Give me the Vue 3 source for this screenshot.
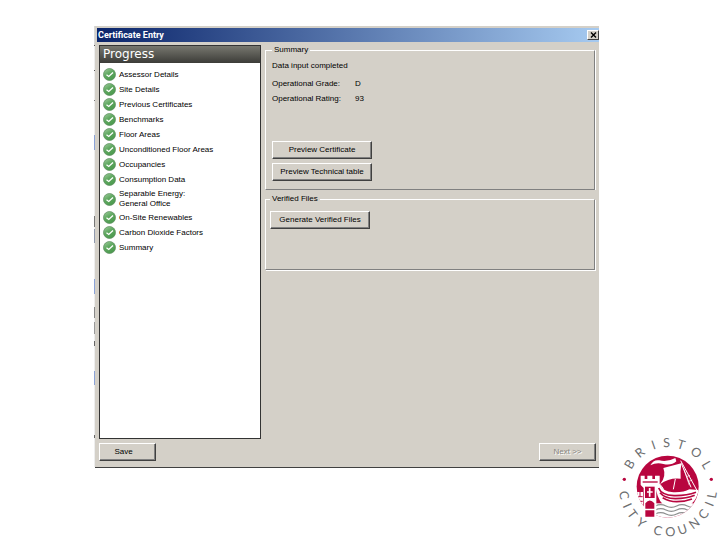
<script setup>
const steps = [
  'Assessor Details',
  'Site Details',
  'Previous Certificates',
  'Benchmarks',
  'Floor Areas',
  'Unconditioned Floor Areas',
  'Occupancies',
  'Consumption Data',
  'Separable Energy:\nGeneral Office',
  'On-Site Renewables',
  'Carbon Dioxide Factors',
  'Summary',
]

const ring = (word, angles) => [...word].map((char, i) => ({ char, angle: angles[i] }))
const topLetters = ring('BRISTOL', [-59, -39, -19, -2, 17, 39, 60])
const bottomLetters = ring('CITYCOUNCIL', [-80, -66, -53, -37, -13, 3, 19, 36, 53, 68, 80])
</script>

<template>
  <div class="page">
    <div class="sliver" aria-hidden="true"></div>
    <main class="dialog">
      <header class="titlebar">
        <h1>Certificate Entry</h1>
        <button type="button" class="close" aria-label="Close">
          <svg viewBox="0 0 7 6" width="7" height="6"><path d="M1 0.5 L6 5.5 M6 0.5 L1 5.5" stroke="#000" stroke-width="1.4" /></svg>
        </button>
      </header>

      <div class="body">
        <nav class="progress">
          <h2>Progress</h2>
          <ul>
            <li v-for="step in steps" :key="step">
              <svg class="tick" viewBox="0 0 26 26" width="13" height="13" aria-hidden="true">
                <defs>
                  <linearGradient id="ball" x1="0" y1="0" x2="0.6" y2="1">
                    <stop offset="0" stop-color="#a3cfa0" />
                    <stop offset="0.5" stop-color="#5fa860" />
                    <stop offset="1" stop-color="#4c9a4e" />
                  </linearGradient>
                </defs>
                <circle cx="13" cy="13" r="12" fill="url(#ball)" stroke="#5d8f60" stroke-width="1.5" />
                <path d="M7 13.5 L11.5 17 L20 9" fill="none" stroke="#fff" stroke-width="2.6" />
              </svg>
              <span>{{ step }}</span>
            </li>
          </ul>
        </nav>

        <div class="groups">
          <fieldset class="summary">
            <legend>Summary</legend>
            <p>Data input completed</p>
            <dl>
              <dt>Operational Grade:</dt>
              <dd>D</dd>
              <dt>Operational Rating:</dt>
              <dd>93</dd>
            </dl>
            <button type="button" class="btn wide">Preview Certificate</button>
            <button type="button" class="btn wide">Preview Technical table</button>
          </fieldset>
          <fieldset class="files">
            <legend>Verified Files</legend>
            <button type="button" class="btn wide">Generate Verified Files</button>
          </fieldset>
        </div>
      </div>

      <footer>
        <button type="button" class="btn">Save</button>
        <button type="button" class="btn" disabled>Next &gt;&gt;</button>
      </footer>
    </main>

    <aside class="brand">
      <svg viewBox="0 0 330 330" width="110" height="110" role="img" aria-label="Bristol City Council">
        <defs>
          <clipPath id="disc"><circle cx="173" cy="170" r="93" /></clipPath>
        </defs>
        <g clip-path="url(#disc)">
          <rect x="78" y="75" width="190" height="190" fill="#b8063f" />
          <path d="M121 106 Q130 88 148 91 Q170 98 196 84 L199 94 Q184 108 160 102 Q140 96 121 106Z" fill="#fff" />
          <path d="M160 114 L214 100 Q210 126 212 146 Q178 142 150 163 Q170 140 160 114Z" fill="#fff" />
          <path d="M212 92 L264 187 M214 100 L243 172 M196 147 L190 178 M150 163 L160 176" stroke="#fff" stroke-width="3" fill="none" />
          <path d="M222 118 L238 166 M230 140 L240 136 M236 154 L247 150" stroke="#fff" stroke-width="2" fill="none" />
          <path d="M136 164 L150 162 Q156 184 190 187 Q222 188 238 178 L266 180 Q262 206 244 222 H158 Q140 204 136 164Z" fill="#fff" />
          <path d="M146 174 Q154 195 192 197 Q228 198 258 187 M150 188 Q164 205 196 206 Q230 206 254 196 M158 203 Q178 215 200 215 Q226 215 246 207" stroke="#b8063f" stroke-width="5" fill="none" />
          <rect x="134" y="220" width="140" height="50" fill="#fff" />
          <path d="M136 228 Q152 220 168 228 T200 228 T232 228 T264 228 M136 240 Q152 232 168 240 T200 240 T232 240 T264 240 M136 252 Q152 244 168 252 T200 252 T232 252" stroke="#8d8f8f" stroke-width="4" fill="none" />
          <path d="M76 186 H99 V262 H76Z" fill="#fff" />
          <path d="M80 200 H98 M80 214 H98 M80 228 H98 M90 186 V200 M84 214 V228" stroke="#b8063f" stroke-width="3" />
        </g>
        <path d="M92 137 H104 V147 H112 V137 H127 V147 H135 V137 H149 V165 L139 174 V264 H101 V174 L92 165Z" fill="#fff" />
        <path d="M98 156 H143" stroke="#b8063f" stroke-width="4" />
        <path d="M105 170 H134 V204 H105Z" fill="#b8063f" />
        <path d="M119 174 V200 M111 186 H128" stroke="#fff" stroke-width="5" />
        <path d="M106 236 V220 Q119 203 133 220 V236Z M106 241 H133 V260 H106Z" fill="#b8063f" />
        <circle cx="43" cy="148" r="5" fill="#b8063f" />
        <circle cx="304" cy="148" r="5" fill="#b8063f" />
        <g class="ring">
          <text v-for="(l, i) in topLetters" :key="'t' + i" text-anchor="middle" :transform="`translate(174 172) rotate(${l.angle}) translate(0 -121)`">{{ l.char }}</text>
          <text v-for="(l, i) in bottomLetters" :key="'b' + i" text-anchor="middle" :transform="`translate(174 172) rotate(${-l.angle}) translate(0 147)`">{{ l.char }}</text>
        </g>
      </svg>
    </aside>
  </div>
</template>

<style>
body {
  margin: 0;
  background: #fff;
}
</style>

<style scoped>
* {
  box-sizing: border-box;
}

.page {
  display: flex;
  min-height: 100vh;
  padding-left: 94px;
  font: 8px/10px "Liberation Sans", Arial, sans-serif;
  color: #000;
}

.sliver {
  width: 1px;
  margin: 26px 0 73px;
  background: linear-gradient(
    #d8d8d8 19px, #555 19px 20px, #eee 20px 44px, #555 44px 45px, #eee 45px 74px, #777 74px 75px,
    #eee 75px 109px, #8ba3d8 109px 124px, #eee 124px 190px, #777 190px 201px, #eee 201px 203px,
    #8f99ad 203px 217px, #eee 217px 253px, #8ba3d8 253px 268px, #eee 268px 281px, #888 281px 292px,
    #eee 292px 296px, #999 296px 308px, #eee 308px 315px, #666 315px 320px, #eee 320px 345px,
    #8ba3d8 345px 359px, #eee 359px 409px, #666 409px 412px, #eee 412px
  );
}

.dialog {
  flex: 1;
  display: flex;
  flex-direction: column;
  min-width: 0;
  margin: 26px 0 72px;
  padding: 2px 0 6px;
  background: #d4d0c8;
  border-bottom: 1px solid #404040;
}

.titlebar {
  display: flex;
  align-items: center;
  justify-content: space-between;
  height: 14px;
  margin-left: 2px;
  padding: 0 0 0 1px;
  background: linear-gradient(90deg, #0a246a, #a6caf0);
}

h1 {
  margin: 0;
  font: bold 9px/14px Roboto, "Liberation Sans", sans-serif;
  color: #fff;
}

.close {
  display: flex;
  align-items: center;
  justify-content: center;
  width: 12px;
  height: 10px;
  padding: 0;
  background: #d4d0c8;
  border: 1px solid;
  border-color: #fff #404040 #404040 #fff;
}

.body {
  flex: 1;
  display: flex;
  gap: 4px;
  padding: 3px 4px 4px;
}

.progress {
  width: 162px;
  background: #fff;
  border: 1px solid #333;
}

h2 {
  margin: 0;
  padding-left: 3px;
  font: 12px/17px "DejaVu Sans", sans-serif;
  color: #fff;
  background: linear-gradient(#77776f, #3c3c38);
}

ul {
  margin: 0;
  padding: 4px 3px;
  list-style: none;
}

li {
  display: flex;
  align-items: center;
  gap: 3px;
  min-height: 15px;
  white-space: pre-line;
}

li:nth-child(9) {
  padding: 2px 0 1px;
}

.tick {
  flex: none;
}

.groups {
  flex: 1;
  display: flex;
  flex-direction: column;
  gap: 4px;
}

fieldset {
  display: flex;
  flex-direction: column;
  align-items: flex-start;
  margin: 0;
  min-width: 0;
  border: 1px solid;
  border-color: #fff #808080 #808080 #fff;
}

.summary {
  height: 145px;
  padding: 6px;
  box-shadow: 1px 0 #fff;
}

.files {
  height: 76px;
  padding: 7px 4px 6px;
  box-shadow: 1px 1px #fff;
}

legend {
  padding: 0 2px;
}

p {
  margin: 0;
}

dl {
  display: grid;
  grid-template-columns: 83px auto;
  row-gap: 5px;
  margin: 8px 0 37px;
}

dd {
  margin: 0;
}

.btn {
  width: 57px;
  height: 18px;
  padding: 0 8px 0 0;
  font: inherit;
  color: #000;
  background: #d4d0c8;
  border: 1px solid;
  border-color: #fff #404040 #404040 #fff;
  box-shadow: inset -1px -1px #808080;
}

.wide {
  width: 100px;
  padding: 0;
}

.wide + .wide {
  margin-top: 4px;
}

.btn:disabled {
  padding: 0;
  color: #88857f;
  text-shadow: 1px 1px #fff;
}

footer {
  display: flex;
  justify-content: space-between;
  padding: 0 3px 0 4px;
}

.brand {
  flex: none;
  align-self: flex-end;
  width: 121px;
  padding-left: 11px;
}

.brand svg {
  display: block;
}

.ring {
  font: 38px Lato, sans-serif;
  fill: #6d6e70;
}
</style>
